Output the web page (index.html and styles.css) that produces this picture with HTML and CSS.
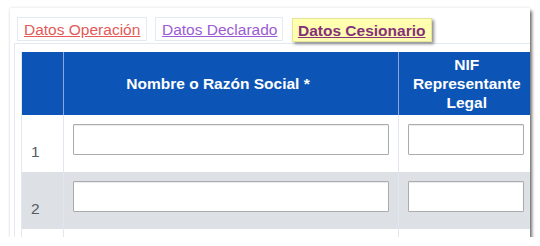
FILE: index.html
```html
<!DOCTYPE html>
<html lang="es">
<head>
<meta charset="utf-8">
<title>Datos Cesionario</title>
<link rel="stylesheet" href="styles.css">
</head>
<body>
<div class="panel">
  <div class="tabs">
    <a class="tab tab-op" href="#">Datos Operación</a>
    <a class="tab tab-dec" href="#">Datos Declarado</a>
    <a class="tab tab-ces" href="#">Datos Cesionario</a>
  </div>
  <div class="box">
    <table class="grid">
      <colgroup>
        <col class="c-num">
        <col class="c-name">
        <col class="c-nif">
      </colgroup>
      <thead>
        <tr>
          <th></th>
          <th class="h-name">Nombre o Razón Social *</th>
          <th>NIF<br>Representante<br>Legal</th>
        </tr>
      </thead>
      <tbody>
        <tr>
          <td class="num">1</td>
          <td><input class="field" type="text"></td>
          <td><input class="field" type="text"></td>
        </tr>
        <tr class="alt">
          <td class="num">2</td>
          <td><input class="field" type="text"></td>
          <td><input class="field" type="text"></td>
        </tr>
        <tr>
          <td class="num"></td>
          <td></td>
          <td></td>
        </tr>
      </tbody>
    </table>
  </div>
</div>
</body>
</html>
```
FILE: styles.css
```css
html, body {
  margin: 0;
  padding: 0;
  background: #ffffff;
}

body {
  font-family: "Liberation Sans", Arial, sans-serif;
}

.panel {
  margin: 8px 0 0 10px;
  width: 520px;
  height: 229px;
  padding: 9px 0 0 4px;
  box-sizing: border-box;
  background: #ffffff;
  overflow: hidden;
  box-shadow: 2px 3px 3px rgba(0, 0, 0, 0.55), 0 0 3px rgba(0, 0, 0, 0.12);
}

.tabs {
  display: flex;
  gap: 8px;
  margin-left: 3px;
  height: 24px;
  align-items: flex-start;
}

.tab {
  display: block;
  height: 24px;
  box-sizing: border-box;
  padding: 2px 6px 0 6px;
  font-size: 15.5px;
  line-height: 20px;
  text-decoration: underline;
  border: 1px solid #e3eaf1;
  background: #ffffff;
  white-space: nowrap;
}

.tab-op {
  color: #e35a58;
  width: 130px;
}

.tab-dec {
  color: #9b5bd4;
  width: 128px;
}

.tab-ces {
  color: #86307a;
  font-weight: bold;
  width: 140px;
  margin-left: 1px;
  margin-top: 1px;
  background: #ffffaf;
  border-color: #e4e49a;
  box-shadow: 2px 2px 3px rgba(0, 0, 0, 0.45);
  padding-left: 5px;
}

.box {
  margin-top: 2px;
  border: 1px solid #e2e9f0;
  padding: 8px 0 0 6px;
  width: max-content;
}

.grid {
  border-collapse: collapse;
  table-layout: fixed;
  width: 513px;
  border-left: 1px solid #e3e9f0;
}

.c-num { width: 42px; }
.c-name { width: 335px; }
.c-nif { width: 136px; }

.grid th {
  background: #0c55b6;
  color: #ffffff;
  font-weight: bold;
  font-size: 15.5px;
  line-height: 19px;
  height: 63px;
  padding: 0;
  text-align: center;
  vertical-align: middle;
  border-left: 1px solid #8fa9d6;
}

.grid th.h-name {
  padding-right: 26px;
}

.grid th:first-child {
  border-left: none;
}

.grid td {
  height: 57px;
  padding: 0;
  border-left: 1px solid #dfe7f0;
  vertical-align: top;
}

.grid td:first-child {
  border-left: none;
}

.grid tr.alt td {
  background: #dde0e4;
}

.grid td.num {
  vertical-align: bottom;
  padding: 0 0 11px 9px;
  box-sizing: border-box;
  color: #555b63;
  font-size: 15.5px;
  line-height: 18px;
}

.field {
  display: block;
  box-sizing: border-box;
  margin: 9px 9px 0 9px;
  width: calc(100% - 18px);
  height: 31px;
  border: 1px solid #a9abae;
  border-radius: 1px;
  background: #ffffff;
  box-shadow: inset 0 1px 1px rgba(0, 0, 0, 0.08);
}

.grid td:last-child .field {
  margin-right: 11px;
  width: calc(100% - 20px);
}
```
